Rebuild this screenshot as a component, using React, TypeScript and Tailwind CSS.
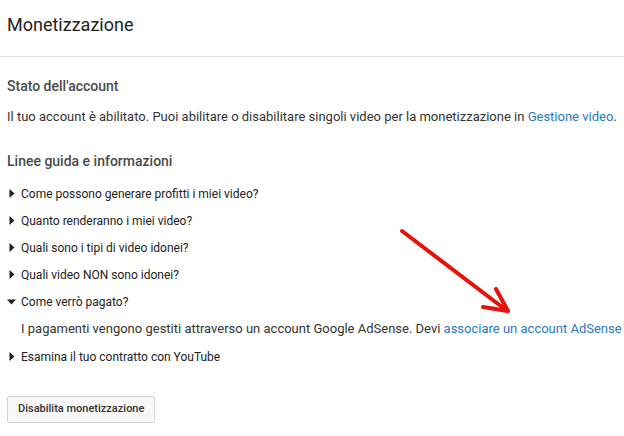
import React from 'react';

const items = [
  'Come possono generare profitti i miei video?',
  'Quanto renderanno i miei video?',
  'Quali sono i tipi di video idonei?',
  'Quali video NON sono idonei?',
];

function Caret({ open }: { open?: boolean }) {
  return open ? (
    <svg width="9" height="6" viewBox="0 0 9 6" className="mr-[5px] shrink-0">
      <path d="M0 0.5 L9 0.5 L4.5 5.5 Z" fill="#222" />
    </svg>
  ) : (
    <svg width="6" height="9" viewBox="0 0 6 9" className="ml-[2px] mr-[6px] shrink-0">
      <path d="M0.5 0 L5.5 4.5 L0.5 9 Z" fill="#222" />
    </svg>
  );
}

export default function App() {
  return (
    <div className="relative w-[624px] h-[436px] bg-white overflow-hidden text-[#333] font-['Roboto',sans-serif]">
      <div className="h-[57px] border-b border-[#e2e2e2] px-[7px] pt-[13px]">
        <h1 className="text-[18px] leading-[24px] text-[#222]">Monetizzazione</h1>
      </div>

      <div className="px-[7px] pt-[19px]">
        <h2 className="text-[14px] leading-[20px] font-medium text-[#4a4a4a]">Stato dell'account</h2>
        <p className="mt-[12px] text-[13px] leading-[18px] text-[#333] whitespace-nowrap">
          Il tuo account è abilitato. Puoi abilitare o disabilitare singoli video per la monetizzazione in{' '}
          <a className="text-[#2a78bd]">Gestione video</a>.
        </p>

        <h2 className="mt-[25px] text-[14px] leading-[20px] font-medium text-[#4a4a4a]">Linee guida e informazioni</h2>

        <ul className="mt-[9px]">
          {items.map((t) => (
            <li key={t} className="flex items-center h-[27px] text-[12px] text-[#222]">
              <Caret />
              {t}
            </li>
          ))}
          <li className="flex items-center h-[27px] text-[12px] text-[#222]">
            <Caret open />
            Come verrò pagato?
          </li>
          <li className="flex items-center h-[28px] pl-[14px] text-[13px] text-[#333] whitespace-nowrap">
            I pagamenti vengono gestiti attraverso un account Google AdSense. Devi&nbsp;
            <a className="text-[#2a78bd]">associare un account AdSense</a>
          </li>
          <li className="flex items-center h-[27px] text-[12px] text-[#222]">
            <Caret />
            Esamina il tuo contratto con YouTube
          </li>
        </ul>

        <button className="mt-[26px] h-[27px] px-[10px] border border-[#d3d3d3] rounded-[2px] bg-[#f8f8f8] text-[11px] font-medium text-[#333]">
          Disabilita monetizzazione
        </button>
      </div>

      <svg className="absolute left-0 top-0 pointer-events-none" width="624" height="436">
        <line x1="402" y1="231" x2="506" y2="310" stroke="#e8120c" strokeWidth="4" strokeLinecap="round" />
        <polyline points="496,289 508,311 483,307" fill="none" stroke="#e8120c" strokeWidth="4" strokeLinecap="round" strokeLinejoin="round" />
      </svg>
    </div>
  );
}
